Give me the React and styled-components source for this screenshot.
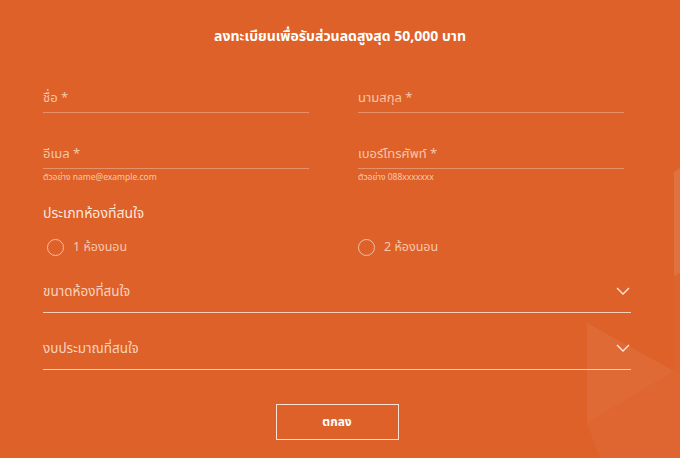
import React from "react";
import styled, { createGlobalStyle } from "styled-components";

const Global = createGlobalStyle`
  html, body { margin: 0; padding: 0; }
  body {
    width: 680px;
    height: 458px;
    overflow: hidden;
    background: #de6129;
    font-family: "Noto Sans", "Noto Sans Thai", "DejaVu Sans", sans-serif;
  }
`;

const Page = styled.div`
  position: relative;
  width: 680px;
  height: 458px;
  background: #de6129;
  overflow: hidden;
  padding-left: 43px;
  box-sizing: border-box;
`;

const Deco = styled.svg`
  position: absolute;
  inset: 0;
  pointer-events: none;
`;

const Content = styled.div`
  position: relative;
  width: 588px;
  padding-top: 26px;
  display: flex;
  flex-direction: column;
`;

const Title = styled.h1`
  margin: 0 0 0 6px;
  font-size: 14px;
  line-height: 20px;
  font-weight: 700;
  color: #ffffff;
  text-align: center;
`;

const Grid = styled.div`
  display: grid;
  grid-template-columns: 266px 266px;
  column-gap: 49px;
  row-gap: ${(p) => p.$rowGap || 0}px;
  margin-top: ${(p) => p.$mt || 0}px;
`;

const Field = styled.div`
  display: flex;
  flex-direction: column;
`;

const Input = styled.div`
  height: 28px;
  display: flex;
  align-items: flex-end;
  padding-bottom: 6px;
  box-sizing: border-box;
  border-bottom: 1px solid rgba(255, 255, 255, 0.3);
  font-size: 13px;
  line-height: 18px;
  color: rgba(255, 225, 208, 0.78);
`;

const Hint = styled.div`
  margin-top: 3px;
  font-size: 8.5px;
  line-height: 10px;
  color: rgba(255, 225, 208, 0.8);
`;

const Section = styled.div`
  margin-top: 21px;
  font-size: 14px;
  line-height: 20px;
  color: rgba(255, 240, 232, 0.95);
`;

const Radio = styled.label`
  display: flex;
  align-items: center;
  gap: 9px;
  padding-left: ${(p) => p.$inset || 0}px;
  height: 20px;
  font-size: 12.5px;
  color: rgba(255, 225, 208, 0.8);
`;

const Circle = styled.span`
  width: 15px;
  height: 15px;
  border-radius: 50%;
  border: 1px solid rgba(255, 225, 208, 0.7);
`;

const Select = styled.div`
  margin-top: ${(p) => p.$mt}px;
  padding: 10px 0 11px;
  display: flex;
  align-items: center;
  justify-content: space-between;
  border-bottom: 1.5px solid rgba(255, 236, 225, 0.78);
  font-size: 13.5px;
  line-height: 20px;
  color: rgba(255, 232, 220, 0.85);
`;

const Chevron = styled.svg`
  margin-right: 1px;
`;

const Button = styled.button`
  align-self: center;
  margin-top: 34px;
  width: 123px;
  height: 36px;
  background: transparent;
  border: 1px solid rgba(255, 240, 232, 0.9);
  color: #ffffff;
  font-family: inherit;
  font-size: 12px;
  font-weight: 700;
  cursor: pointer;
`;

const ChevronIcon = () => (
  <Chevron width="14" height="8" viewBox="0 0 14 8">
    <polyline points="1,1 7,7 13,1" fill="none" stroke="rgba(255,240,232,0.95)" strokeWidth="1.3" />
  </Chevron>
);

export default function App() {
  return (
    <Page>
      <Global />
      <Deco width="680" height="458" viewBox="0 0 680 458">
        <polygon points="674,172 680,168 680,273 674,276" fill="rgba(255,255,255,0.1)" />
        <polygon points="587,323 674,371 587,423" fill="rgba(255,255,255,0.06)" />
        <polygon points="587,423 674,371 680,374 680,458 600,458" fill="rgba(255,255,255,0.035)" />
        <polygon points="674,276 680,273 680,374 674,371" fill="rgba(255,255,255,0.02)" />
      </Deco>
      <Content>
        <Title>ลงทะเบียนเพื่อรับส่วนลดสูงสุด 50,000 บาท</Title>
        <Grid $mt={39} $rowGap={28}>
          <Field>
            <Input>ชื่อ *</Input>
          </Field>
          <Field>
            <Input>นามสกุล *</Input>
          </Field>
          <Field>
            <Input>อีเมล *</Input>
            <Hint>ตัวอย่าง name@example.com</Hint>
          </Field>
          <Field>
            <Input>เบอร์โทรศัพท์ *</Input>
            <Hint>ตัวอย่าง 088xxxxxxx</Hint>
          </Field>
        </Grid>
        <Section>ประเภทห้องที่สนใจ</Section>
        <Grid $mt={14}>
          <Radio $inset={4}>
            <Circle />1 ห้องนอน
          </Radio>
          <Radio>
            <Circle />2 ห้องนอน
          </Radio>
        </Grid>
        <Select $mt={14}>
          ขนาดห้องที่สนใจ
          <ChevronIcon />
        </Select>
        <Select $mt={15}>
          งบประมาณที่สนใจ
          <ChevronIcon />
        </Select>
        <Button>ตกลง</Button>
      </Content>
    </Page>
  );
}
